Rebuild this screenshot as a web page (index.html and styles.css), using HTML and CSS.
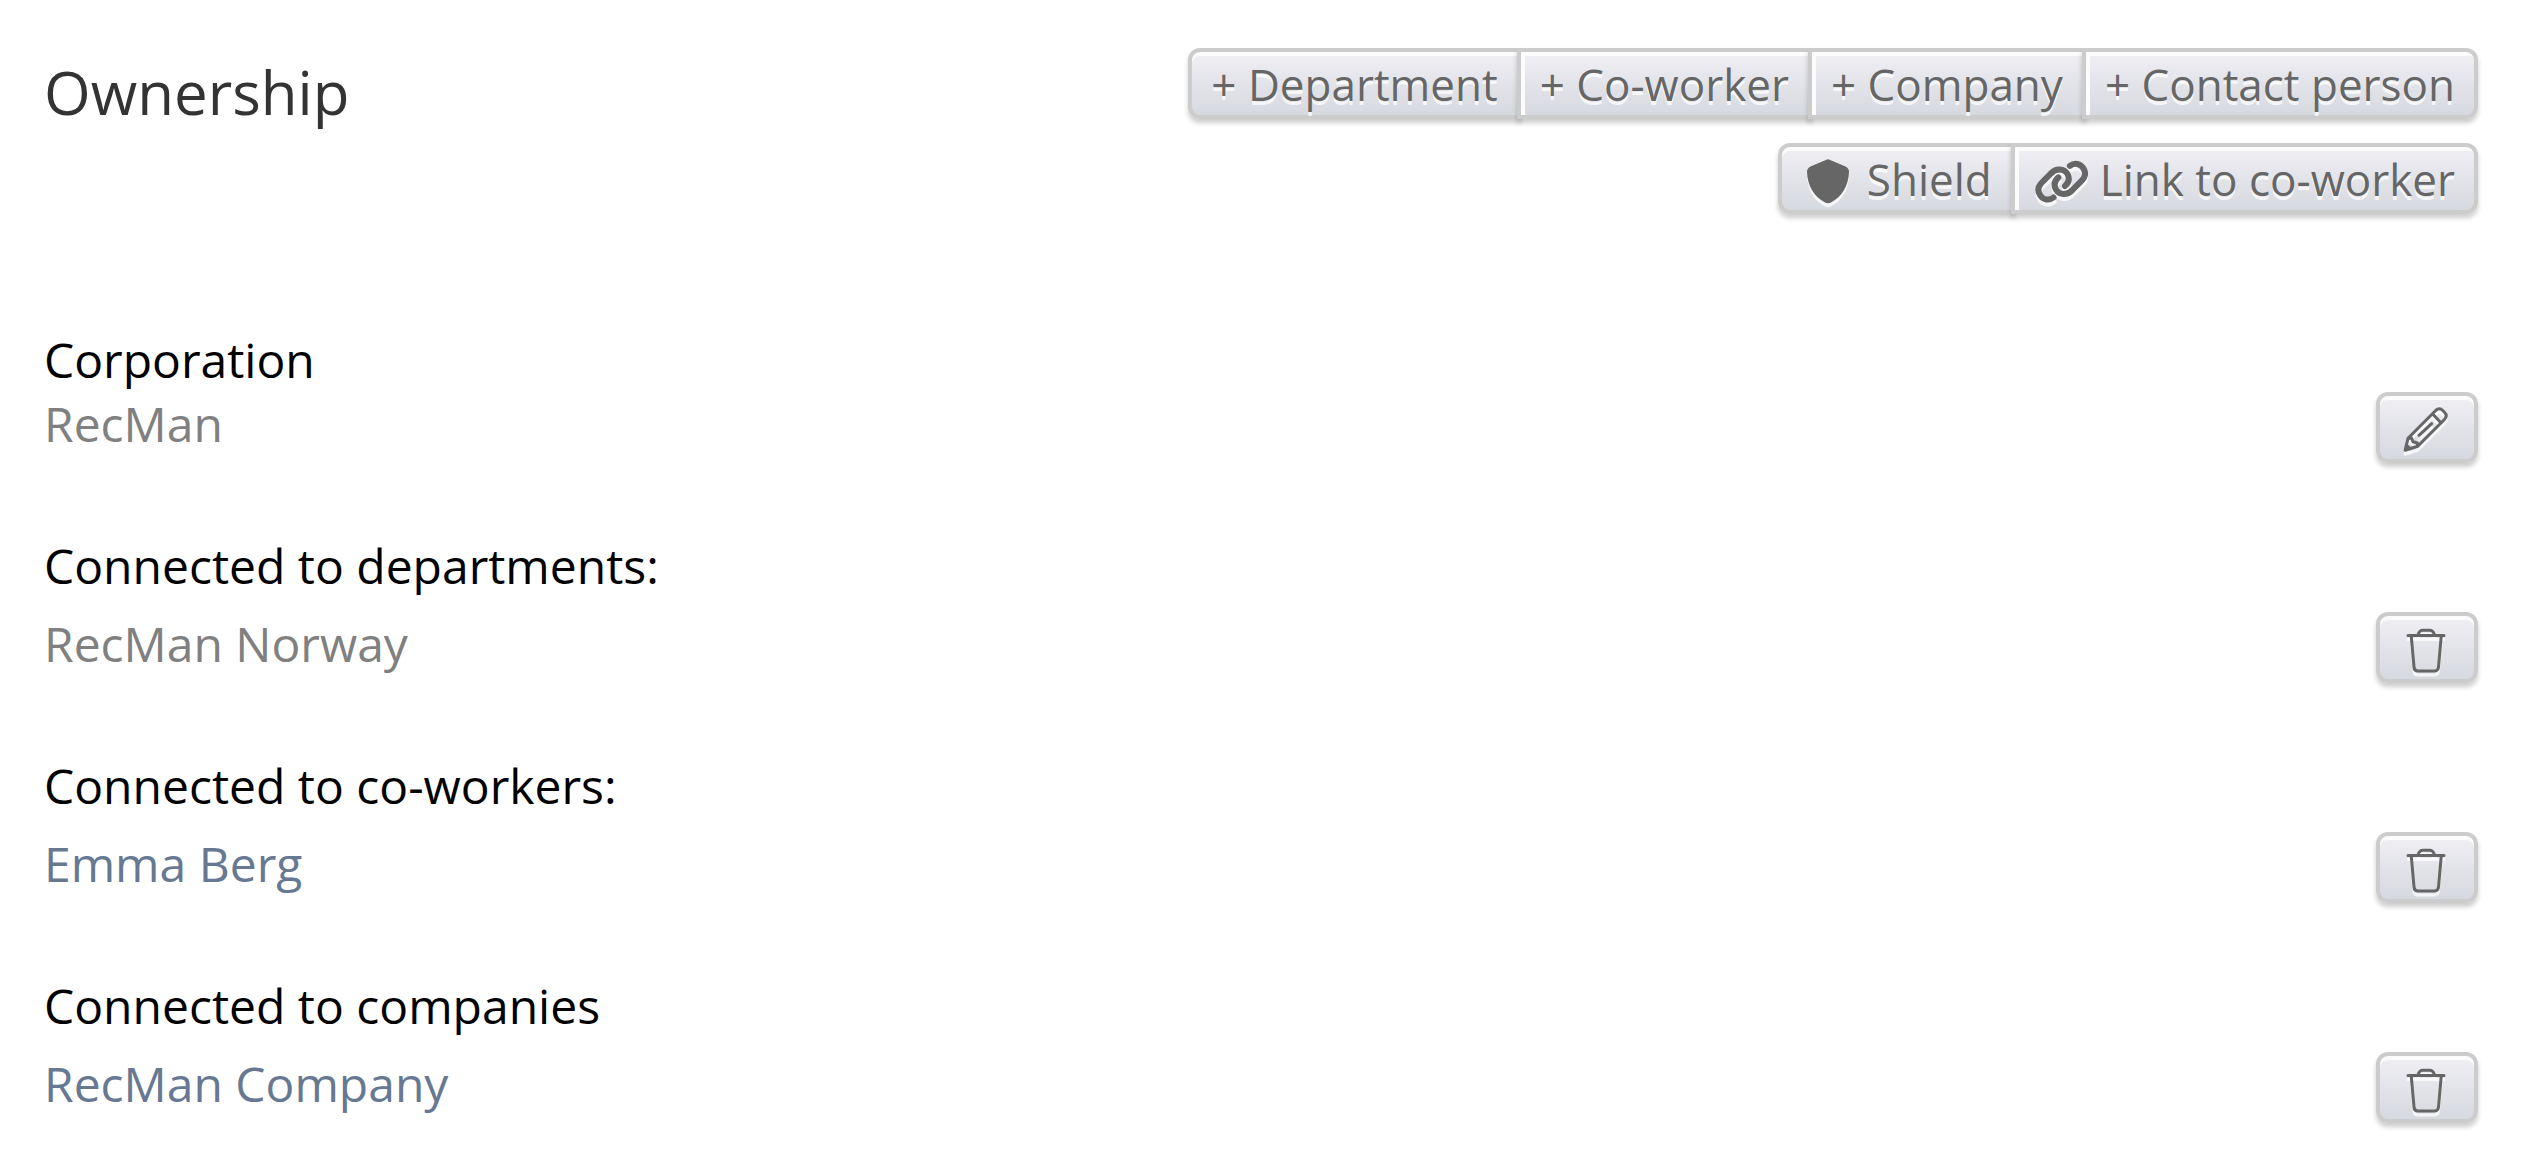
FILE: index.html
```html
<!DOCTYPE html>
<html lang="en">

<head>
  <meta charset="UTF-8">
  <meta name="viewport" content="width=device-width, initial-scale=1.0">
  <title>Ownership</title>

  <link rel="stylesheet" href="styles.css">
</head>

<body>
  <!-- shared icons -->
  <svg class="sprite" aria-hidden="true">
    <symbol id="trash" viewBox="0 0 52 52">
      <path d="M7 13.5H43M17 13C18 9.5 19 8.3 22 8.3H28.5C31.5 8.3 32.5 9.5 33.5 13M10.2 13.5L13 45C13.2 48 14.5 49 17 49H33.5C36 49 37.3 48 37.5 45L40.3 13.5" />
    </symbol>
  </svg>

  <header class="header">
    <h1 class="title">Ownership</h1>
    <div class="toolbar">
      <div class="btn-group">
        <button type="button" class="btn">+ Department</button>
        <button type="button" class="btn">+ Co-worker</button>
        <button type="button" class="btn">+ Company</button>
        <button type="button" class="btn">+ Contact person</button>
      </div>
      <div class="btn-group">
        <button type="button" class="btn">
          <svg class="icon icon-solid" viewBox="0 0 54 54" aria-hidden="true">
            <path d="M25.5 7.7Q27 7 28.5 7.7L44.5 14.5Q48 16.2 48 20C47.5 34 41 44.5 30 50.5Q27 52 24 50.5C13 44.5 6.5 34 6 20Q6 16.2 9.5 14.5Z" />
          </svg>
          Shield
        </button>
        <button type="button" class="btn">
          <svg class="icon icon-link" viewBox="0 0 54 54" aria-hidden="true">
            <path d="M19.5 45.5C15 49 9 48 6 43C3.5 39 4 35 7 31.5L16.7 21.7C21.5 16 30 16 33.5 22C36 27 34.5 31 31 34" />
            <path d="M35.9 13.9C40.4 10.4 46.4 11.4 49.4 16.4C51.9 20.4 51.4 24.4 48.4 27.9L38.7 37.7C33.9 43.4 25.4 43.4 21.9 37.4C19.4 32.4 20.9 28.4 24.4 25.4" />
          </svg>
          Link to co-worker
        </button>
      </div>
    </div>
  </header>

  <main class="sections">
    <section>
      <h2 class="label">Corporation</h2>
      <div class="row">
        <span class="value">RecMan</span>
        <button type="button" class="btn btn-icon" aria-label="Edit">
          <svg class="icon icon-line" viewBox="0 0 52 52" aria-hidden="true">
            <path d="M4.2 48.2L7 36.3L34.2 9C36.5 6.2 39.5 6.2 42 8.7L43.5 10.2C46 12.7 46 15 43.2 17.8L16.7 44.3ZM7 36.3L10.5 36L12 39.7L16.3 41L16.7 44.3M31.7 12L39.7 20.5M18 33.3L30.7 21.7M5.3 43L9.3 46.8" />
          </svg>
        </button>
      </div>
    </section>

    <section>
      <h2 class="label label-spaced">Connected to departments:</h2>
      <div class="row">
        <span class="value">RecMan Norway</span>
        <button type="button" class="btn btn-icon" aria-label="Delete">
          <svg class="icon icon-line" aria-hidden="true"><use href="#trash" /></svg>
        </button>
      </div>
    </section>

    <section>
      <h2 class="label label-spaced">Connected to co-workers:</h2>
      <div class="row">
        <a class="value" href="#">Emma Berg</a>
        <button type="button" class="btn btn-icon" aria-label="Delete">
          <svg class="icon icon-line" aria-hidden="true"><use href="#trash" /></svg>
        </button>
      </div>
    </section>

    <section>
      <h2 class="label label-spaced">Connected to companies</h2>
      <div class="row">
        <a class="value" href="#">RecMan Company</a>
        <button type="button" class="btn btn-icon" aria-label="Delete">
          <svg class="icon icon-line" aria-hidden="true"><use href="#trash" /></svg>
        </button>
      </div>
    </section>
  </main>
</body>

</html>
```
FILE: styles.css
```css
* {
  box-sizing: border-box;
}

body {
  margin: 0;
  padding: 48px 44px;
  background: #fff;
  color: #000;
  font-family: "Open Sans", "Noto Sans", sans-serif;
  font-size: 48px;
  line-height: 64px;
}

.sprite {
  display: none;
}

/* header */
.header {
  display: flex;
  justify-content: space-between;
  align-items: flex-start;
  margin-bottom: 114px;
}

.title {
  margin: 0;
  color: #333;
  font-size: 60px;
  font-weight: 400;
  line-height: 88px;
}

.toolbar {
  display: flex;
  flex-direction: column;
  align-items: flex-end;
  gap: 24px;
}

/* buttons */
.btn-group {
  display: flex;
}

.btn {
  display: flex;
  align-items: center;
  gap: 12px;
  height: 71px;
  padding: 0 19px;
  border: 4px solid #ccc;
  border-radius: 12px;
  background: linear-gradient(#f0eff4, #d6d9df);
  box-shadow: inset 0 4px 0 #fcfcfd, 0 4px 5px rgba(0, 0, 0, 0.2);
  color: #666;
  font-family: inherit;
  font-size: 44px;
  line-height: 60px;
  text-shadow: 0 4px 0 rgba(255, 255, 255, 0.75);
  white-space: nowrap;
  cursor: pointer;
}

.btn-icon {
  padding: 0 21px;
}

.btn-group .btn {
  border-radius: 0;
}

.btn-group .btn:first-child {
  border-radius: 12px 0 0 12px;
}

.btn-group .btn:last-child {
  border-radius: 0 12px 12px 0;
}

/* neighbours share one border */
.btn-group .btn + .btn {
  margin-left: -4px;
  box-shadow: inset 4px 4px 0 #fcfcfd, 0 4px 5px rgba(0, 0, 0, 0.2);
}

/* icons */
.icon {
  flex: none;
  width: 54px;
  height: 54px;
  filter: drop-shadow(0 4px 0 rgba(255, 255, 255, 0.75));
}

.icon-solid {
  fill: #666;
}

.icon-link {
  fill: none;
  stroke: #666;
  stroke-width: 6;
  stroke-linecap: round;
}

.icon-line {
  width: 52px;
  height: 52px;
  fill: none;
  stroke: #666;
  stroke-width: 3;
  stroke-linecap: round;
  stroke-linejoin: round;
}

/* connections */
.sections {
  display: flex;
  flex-direction: column;
  gap: 71px;
}

.label {
  margin: 0;
  font-size: 48px;
  font-weight: 400;
}

.label-spaced {
  margin-bottom: 14px;
}

.row {
  display: flex;
  justify-content: space-between;
  align-items: flex-start;
}

.value {
  color: #808080;
}

a.value {
  color: #667892;
  text-decoration: none;
}
```
